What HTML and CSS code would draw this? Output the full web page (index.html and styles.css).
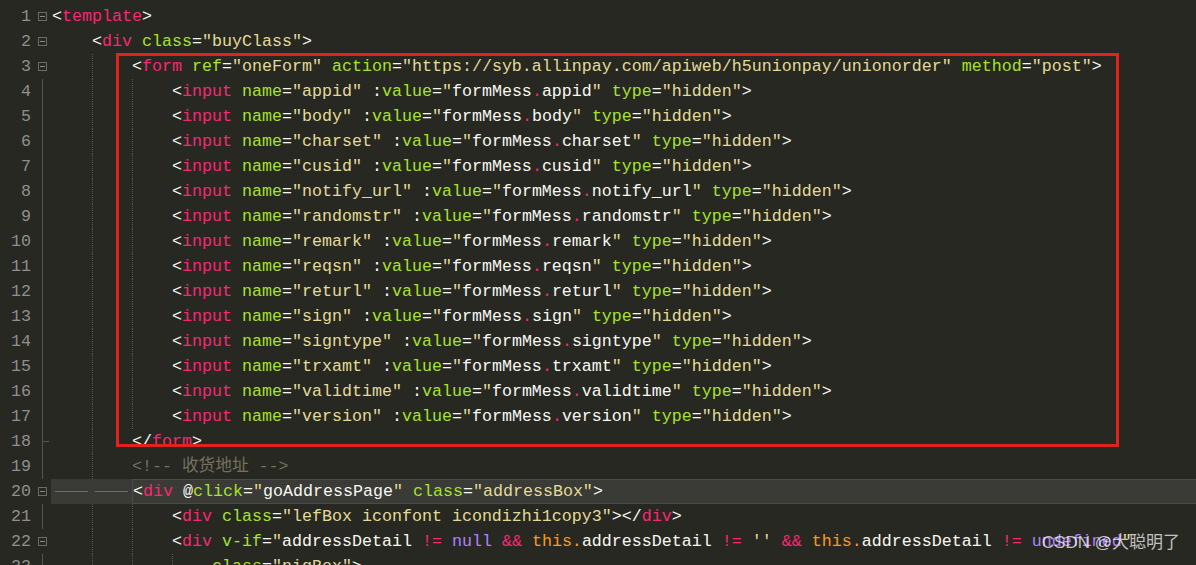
FILE: index.html
```html
<!DOCTYPE html>
<html lang="zh">
<head>
  <meta charset="UTF-8" />
  <title>buyClass.vue</title>
  <link rel="stylesheet" href="styles.css">
</head>
<body>
  <div class="editor">
    <div class="line"><span class="num">1</span><span class="fold mark"></span><span class="code">&lt;<span class="t">template</span>&gt;</span></div>
    <div class="line"><span class="num">2</span><span class="fold mark"></span><span class="code">    &lt;<span class="t">div</span> <span class="a">class</span>=<span class="s">"buyClass"</span>&gt;</span></div>
    <div class="line"><span class="num">3</span><span class="fold mark"></span><span class="code">    <span class="g"></span>&lt;<span class="t">form</span> <span class="a">ref</span>=<span class="s">"oneForm"</span> <span class="a">action</span>=<span class="s">"https://syb.allinpay.com/apiweb/h5unionpay/unionorder"</span> <span class="a">method</span>=<span class="s">"post"</span>&gt;</span></div>
    <div class="line"><span class="num">4</span><span class="fold bar"></span><span class="code">    <span class="g"></span><span class="g"></span>&lt;<span class="t">input</span> <span class="a">name</span>=<span class="s">"appid"</span> :<span class="a">value</span>=<span class="s">"</span>formMess<span class="t">.</span>appid<span class="s">"</span> <span class="a">type</span>=<span class="s">"hidden"</span>&gt;</span></div>
    <div class="line"><span class="num">5</span><span class="fold bar"></span><span class="code">    <span class="g"></span><span class="g"></span>&lt;<span class="t">input</span> <span class="a">name</span>=<span class="s">"body"</span> :<span class="a">value</span>=<span class="s">"</span>formMess<span class="t">.</span>body<span class="s">"</span> <span class="a">type</span>=<span class="s">"hidden"</span>&gt;</span></div>
    <div class="line"><span class="num">6</span><span class="fold bar"></span><span class="code">    <span class="g"></span><span class="g"></span>&lt;<span class="t">input</span> <span class="a">name</span>=<span class="s">"charset"</span> :<span class="a">value</span>=<span class="s">"</span>formMess<span class="t">.</span>charset<span class="s">"</span> <span class="a">type</span>=<span class="s">"hidden"</span>&gt;</span></div>
    <div class="line"><span class="num">7</span><span class="fold bar"></span><span class="code">    <span class="g"></span><span class="g"></span>&lt;<span class="t">input</span> <span class="a">name</span>=<span class="s">"cusid"</span> :<span class="a">value</span>=<span class="s">"</span>formMess<span class="t">.</span>cusid<span class="s">"</span> <span class="a">type</span>=<span class="s">"hidden"</span>&gt;</span></div>
    <div class="line"><span class="num">8</span><span class="fold bar"></span><span class="code">    <span class="g"></span><span class="g"></span>&lt;<span class="t">input</span> <span class="a">name</span>=<span class="s">"notify_url"</span> :<span class="a">value</span>=<span class="s">"</span>formMess<span class="t">.</span>notify_url<span class="s">"</span> <span class="a">type</span>=<span class="s">"hidden"</span>&gt;</span></div>
    <div class="line"><span class="num">9</span><span class="fold bar"></span><span class="code">    <span class="g"></span><span class="g"></span>&lt;<span class="t">input</span> <span class="a">name</span>=<span class="s">"randomstr"</span> :<span class="a">value</span>=<span class="s">"</span>formMess<span class="t">.</span>randomstr<span class="s">"</span> <span class="a">type</span>=<span class="s">"hidden"</span>&gt;</span></div>
    <div class="line"><span class="num">10</span><span class="fold bar"></span><span class="code">    <span class="g"></span><span class="g"></span>&lt;<span class="t">input</span> <span class="a">name</span>=<span class="s">"remark"</span> :<span class="a">value</span>=<span class="s">"</span>formMess<span class="t">.</span>remark<span class="s">"</span> <span class="a">type</span>=<span class="s">"hidden"</span>&gt;</span></div>
    <div class="line"><span class="num">11</span><span class="fold bar"></span><span class="code">    <span class="g"></span><span class="g"></span>&lt;<span class="t">input</span> <span class="a">name</span>=<span class="s">"reqsn"</span> :<span class="a">value</span>=<span class="s">"</span>formMess<span class="t">.</span>reqsn<span class="s">"</span> <span class="a">type</span>=<span class="s">"hidden"</span>&gt;</span></div>
    <div class="line"><span class="num">12</span><span class="fold bar"></span><span class="code">    <span class="g"></span><span class="g"></span>&lt;<span class="t">input</span> <span class="a">name</span>=<span class="s">"returl"</span> :<span class="a">value</span>=<span class="s">"</span>formMess<span class="t">.</span>returl<span class="s">"</span> <span class="a">type</span>=<span class="s">"hidden"</span>&gt;</span></div>
    <div class="line"><span class="num">13</span><span class="fold bar"></span><span class="code">    <span class="g"></span><span class="g"></span>&lt;<span class="t">input</span> <span class="a">name</span>=<span class="s">"sign"</span> :<span class="a">value</span>=<span class="s">"</span>formMess<span class="t">.</span>sign<span class="s">"</span> <span class="a">type</span>=<span class="s">"hidden"</span>&gt;</span></div>
    <div class="line"><span class="num">14</span><span class="fold bar"></span><span class="code">    <span class="g"></span><span class="g"></span>&lt;<span class="t">input</span> <span class="a">name</span>=<span class="s">"signtype"</span> :<span class="a">value</span>=<span class="s">"</span>formMess<span class="t">.</span>signtype<span class="s">"</span> <span class="a">type</span>=<span class="s">"hidden"</span>&gt;</span></div>
    <div class="line"><span class="num">15</span><span class="fold bar"></span><span class="code">    <span class="g"></span><span class="g"></span>&lt;<span class="t">input</span> <span class="a">name</span>=<span class="s">"trxamt"</span> :<span class="a">value</span>=<span class="s">"</span>formMess<span class="t">.</span>trxamt<span class="s">"</span> <span class="a">type</span>=<span class="s">"hidden"</span>&gt;</span></div>
    <div class="line"><span class="num">16</span><span class="fold bar"></span><span class="code">    <span class="g"></span><span class="g"></span>&lt;<span class="t">input</span> <span class="a">name</span>=<span class="s">"validtime"</span> :<span class="a">value</span>=<span class="s">"</span>formMess<span class="t">.</span>validtime<span class="s">"</span> <span class="a">type</span>=<span class="s">"hidden"</span>&gt;</span></div>
    <div class="line"><span class="num">17</span><span class="fold bar"></span><span class="code">    <span class="g"></span><span class="g"></span>&lt;<span class="t">input</span> <span class="a">name</span>=<span class="s">"version"</span> :<span class="a">value</span>=<span class="s">"</span>formMess<span class="t">.</span>version<span class="s">"</span> <span class="a">type</span>=<span class="s">"hidden"</span>&gt;</span></div>
    <div class="line"><span class="num">18</span><span class="fold bar end"></span><span class="code">    <span class="g"></span>&lt;/<span class="t">form</span>&gt;</span></div>
    <div class="line"><span class="num">19</span><span class="fold bar"></span><span class="code">    <span class="g"></span><span class="c">&lt;!-- 收货地址 --&gt;</span></span></div>
    <div class="line current"><span class="num">20</span><span class="fold mark"></span><span class="code"><span class="dash"></span><span class="dash"></span><span class="cur">&lt;<span class="t">div</span> @<span class="a">click</span>=<span class="s">"</span>goAddressPage<span class="s">"</span> <span class="a">class</span>=<span class="s">"addressBox"</span>&gt;</span></span></div>
    <div class="line"><span class="num">21</span><span class="fold bar"></span><span class="code">    <span class="g"></span><span class="g"></span>&lt;<span class="t">div</span> <span class="a">class</span>=<span class="s">"lefBox iconfont icondizhi1copy3"</span>&gt;&lt;/<span class="t">div</span>&gt;</span></div>
    <div class="line"><span class="num">22</span><span class="fold mark"></span><span class="code">    <span class="g"></span><span class="g"></span>&lt;<span class="t">div</span> <span class="a">v-if</span>=<span class="s">"</span>addressDetail <span class="t">!=</span> <span class="k">null</span> <span class="t">&amp;&amp;</span> <span class="th">this.</span>addressDetail <span class="t">!=</span> <span class="s">''</span> <span class="t">&amp;&amp;</span> <span class="th">this.</span>addressDetail <span class="t">!=</span> <span class="k">undefined</span><span class="s">"</span></span></div>
    <div class="line"><span class="num">23</span><span class="fold bar"></span><span class="code">    <span class="g"></span><span class="g"></span><span class="g"></span><span class="a">class</span>=<span class="s">"nigBox"</span>&gt;</span></div>

    <!-- recuadro rojo de la captura -->
    <div class="callout"></div>
    <div class="watermark">CSDN @大聪明了</div>
  </div>
</body>
</html>
```

FILE: styles.css
```css
body {
  margin: 0;
  padding: 0;
  background: #272822;
  overflow: hidden;
  height: 565px;
}

.editor {
  position: relative;
  padding-top: 4px;
  font-family: "Liberation Mono", "Noto Sans CJK SC", monospace;
  font-size: 16.67px;
  color: #f8f8f2;
}

.line {
  display: flex;
  height: 25px;
  line-height: 25px;
}

.num {
  width: 31px;
  padding-right: 1px;
  text-align: right;
  color: #8f908a;
}

.fold {
  display: block;
  width: 19px;
  height: 25px;
}

.fold.mark::before {
  content: "";
  display: block;
  width: 7px;
  height: 7px;
  margin: 8px 0 0 6px;
  border: 1px solid #6c6c67;
  background: linear-gradient(#8a8a85, #8a8a85) center / 5px 1px no-repeat;
}

.fold.bar {
  background: linear-gradient(#55554f, #55554f) 10px 0 / 1px 100% no-repeat;
}

.fold.end {
  background:
    linear-gradient(#55554f, #55554f) 10px 0 / 1px 100% no-repeat,
    linear-gradient(#55554f, #55554f) 10px 12px / 7px 1px no-repeat;
}

.code {
  flex: 1;
  padding-left: 1px;
  white-space: pre;
}

.g {
  display: inline-block;
  width: 40px;
  height: 25px;
  vertical-align: top;
  box-sizing: border-box;
  border-left: 1px dotted #56564f;
}

.current .code {
  display: flex;
  background: #3a3a36;
}

.dash {
  display: inline-block;
  width: 40px;
  height: 25px;
  flex: none;
  background: linear-gradient(#6e6e69, #6e6e69) 3px 12px / 33px 1px no-repeat;
}

.cur {
  flex: 1;
  box-sizing: border-box;
  height: 25px;
  line-height: 23px;
  border: 1px solid #4c4c47;
  border-right: none;
}

.t { color: #f92672; }
.a { color: #a6e22e; }
.s { color: #e3da98; }
.k { color: #ae81ff; }
.th { color: #fd971f; }
.c { color: #75715e; }

.callout {
  position: absolute;
  left: 116px;
  top: 53px;
  width: 1003px;
  height: 394px;
  box-sizing: border-box;
  border: 3px solid #e2231a;
}

.watermark {
  position: absolute;
  right: 16px;
  top: 531px;
  font-family: "Liberation Sans", "Noto Sans CJK SC", sans-serif;
  font-size: 17px;
  line-height: 24px;
  color: rgba(255, 255, 255, 0.72);
}
```
